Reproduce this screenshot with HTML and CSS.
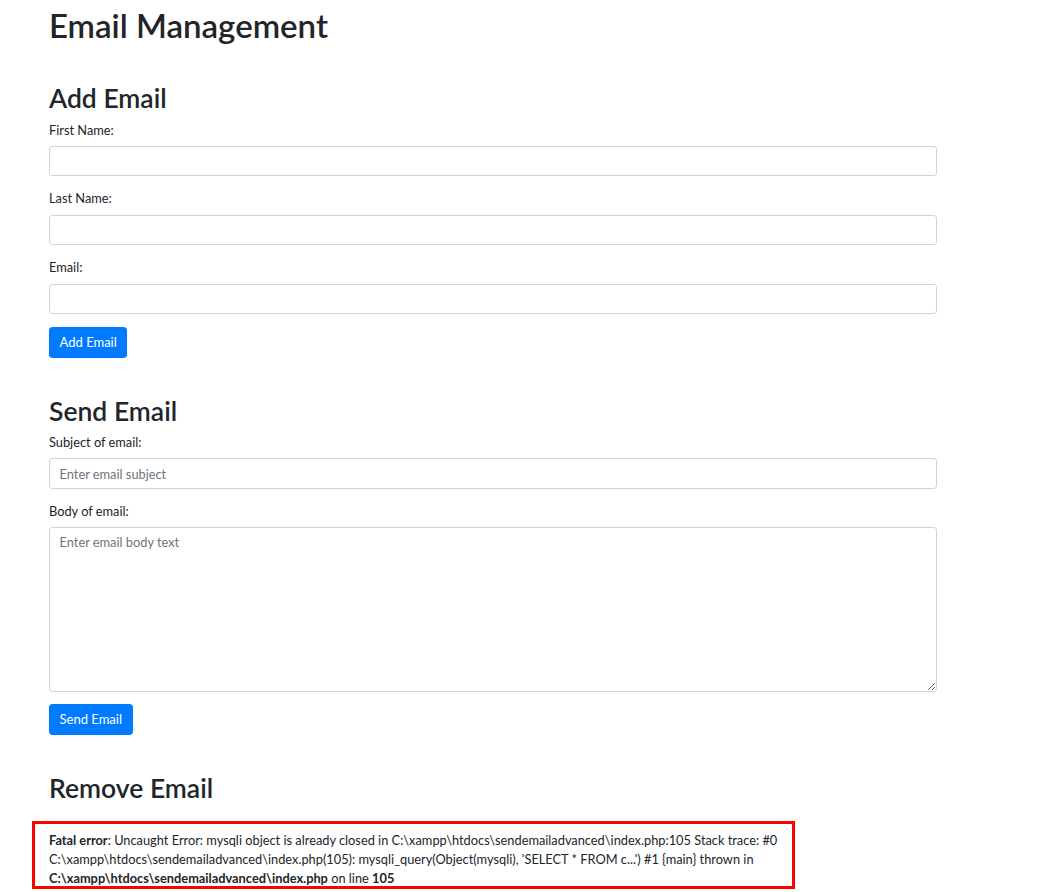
FILE: index.html
```html
<!DOCTYPE html>
<html lang="en">
<head>
<meta charset="utf-8">
<title>Email Management</title>
<link rel="stylesheet" href="styles.css">
</head>
<body>
<div class="container">
  <h1 class="title">Email Management</h1>

  <section class="section first">
    <h2 class="section-title">Add Email</h2>
    <form class="form">
      <div class="form-group">
        <label class="label">First Name:</label>
        <input class="input" type="text">
      </div>
      <div class="form-group">
        <label class="label">Last Name:</label>
        <input class="input" type="text">
      </div>
      <div class="form-group">
        <label class="label">Email:</label>
        <input class="input" type="text">
      </div>
      <button class="btn" type="button">Add Email</button>
    </form>
  </section>

  <section class="section">
    <h2 class="section-title">Send Email</h2>
    <form class="form">
      <div class="form-group">
        <label class="label">Subject of email:</label>
        <input class="input" type="text" placeholder="Enter email subject">
      </div>
      <div class="form-group">
        <label class="label">Body of email:</label>
        <textarea class="input textarea" placeholder="Enter email body text"></textarea>
      </div>
      <button class="btn" type="button">Send Email</button>
    </form>
  </section>

  <section class="section">
    <h2 class="section-title">Remove Email</h2>
  </section>

  <div class="error-box">
    <b>Fatal error</b>: Uncaught Error: mysqli object is already closed in C:\xampp\htdocs\sendemailadvanced\index.php:105 Stack trace: #0<br>C:\xampp\htdocs\sendemailadvanced\index.php(105): mysqli_query(Object(mysqli), 'SELECT * FROM c...') #1 {main} thrown in<br><b>C:\xampp\htdocs\sendemailadvanced\index.php</b> on line <b>105</b>
  </div>
</div>
</body>
</html>
```

FILE: styles.css
```css
* { box-sizing: border-box; }

html, body {
  margin: 0;
  padding: 0;
  background: #fff;
}

body {
  font-family: "Lato", "Open Sans", "Liberation Sans", sans-serif;
  font-size: 12.8px;
  line-height: 1.5;
  color: #212529;
}

.container {
  width: 937px;
  padding-left: 49px;
}

.title {
  margin: 6px 0 0;
  font-size: 33px;
  font-weight: 600;
  line-height: 38.4px;
}

.section {
  margin-top: 38px;
}

.section.first {
  margin-top: 39px;
}

.section-title {
  margin: 0 0 6.4px;
  font-size: 26.5px;
  font-weight: 600;
  line-height: 30.7px;
}

.form {
  margin: 0;
}

.form-group {
  display: flex;
  flex-direction: column;
  margin-bottom: 12.8px;
}

.label {
  display: block;
  margin-bottom: 6.4px;
  line-height: 19.2px;
}

.input {
  display: block;
  width: 888px;
  height: 30.4px;
  padding: 4.8px 9.6px;
  font-family: inherit;
  font-size: 12.8px;
  line-height: 19.2px;
  color: #495057;
  background: #fff;
  border: 1px solid #ced4da;
  border-radius: 3.2px;
  outline: none;
}

.input::placeholder {
  color: #6c757d;
  opacity: 1;
}

.textarea {
  height: 164.5px;
  resize: vertical;
}

.btn {
  display: inline-block;
  padding: 4.8px 9.6px;
  font-family: inherit;
  font-size: 13px;
  line-height: 19.2px;
  color: #fff;
  background: #007bff;
  border: 1px solid #007bff;
  border-radius: 3.2px;
  cursor: pointer;
}

.error-box {
  margin: 17px 0 0 -17px;
  width: 763px;
  padding: 7px 0 0 14px;
  border: 3px solid #ff0000;
  white-space: nowrap;
  line-height: 19.2px;
  height: 68px;
}

.error-box b {
  font-weight: 700;
}
```
